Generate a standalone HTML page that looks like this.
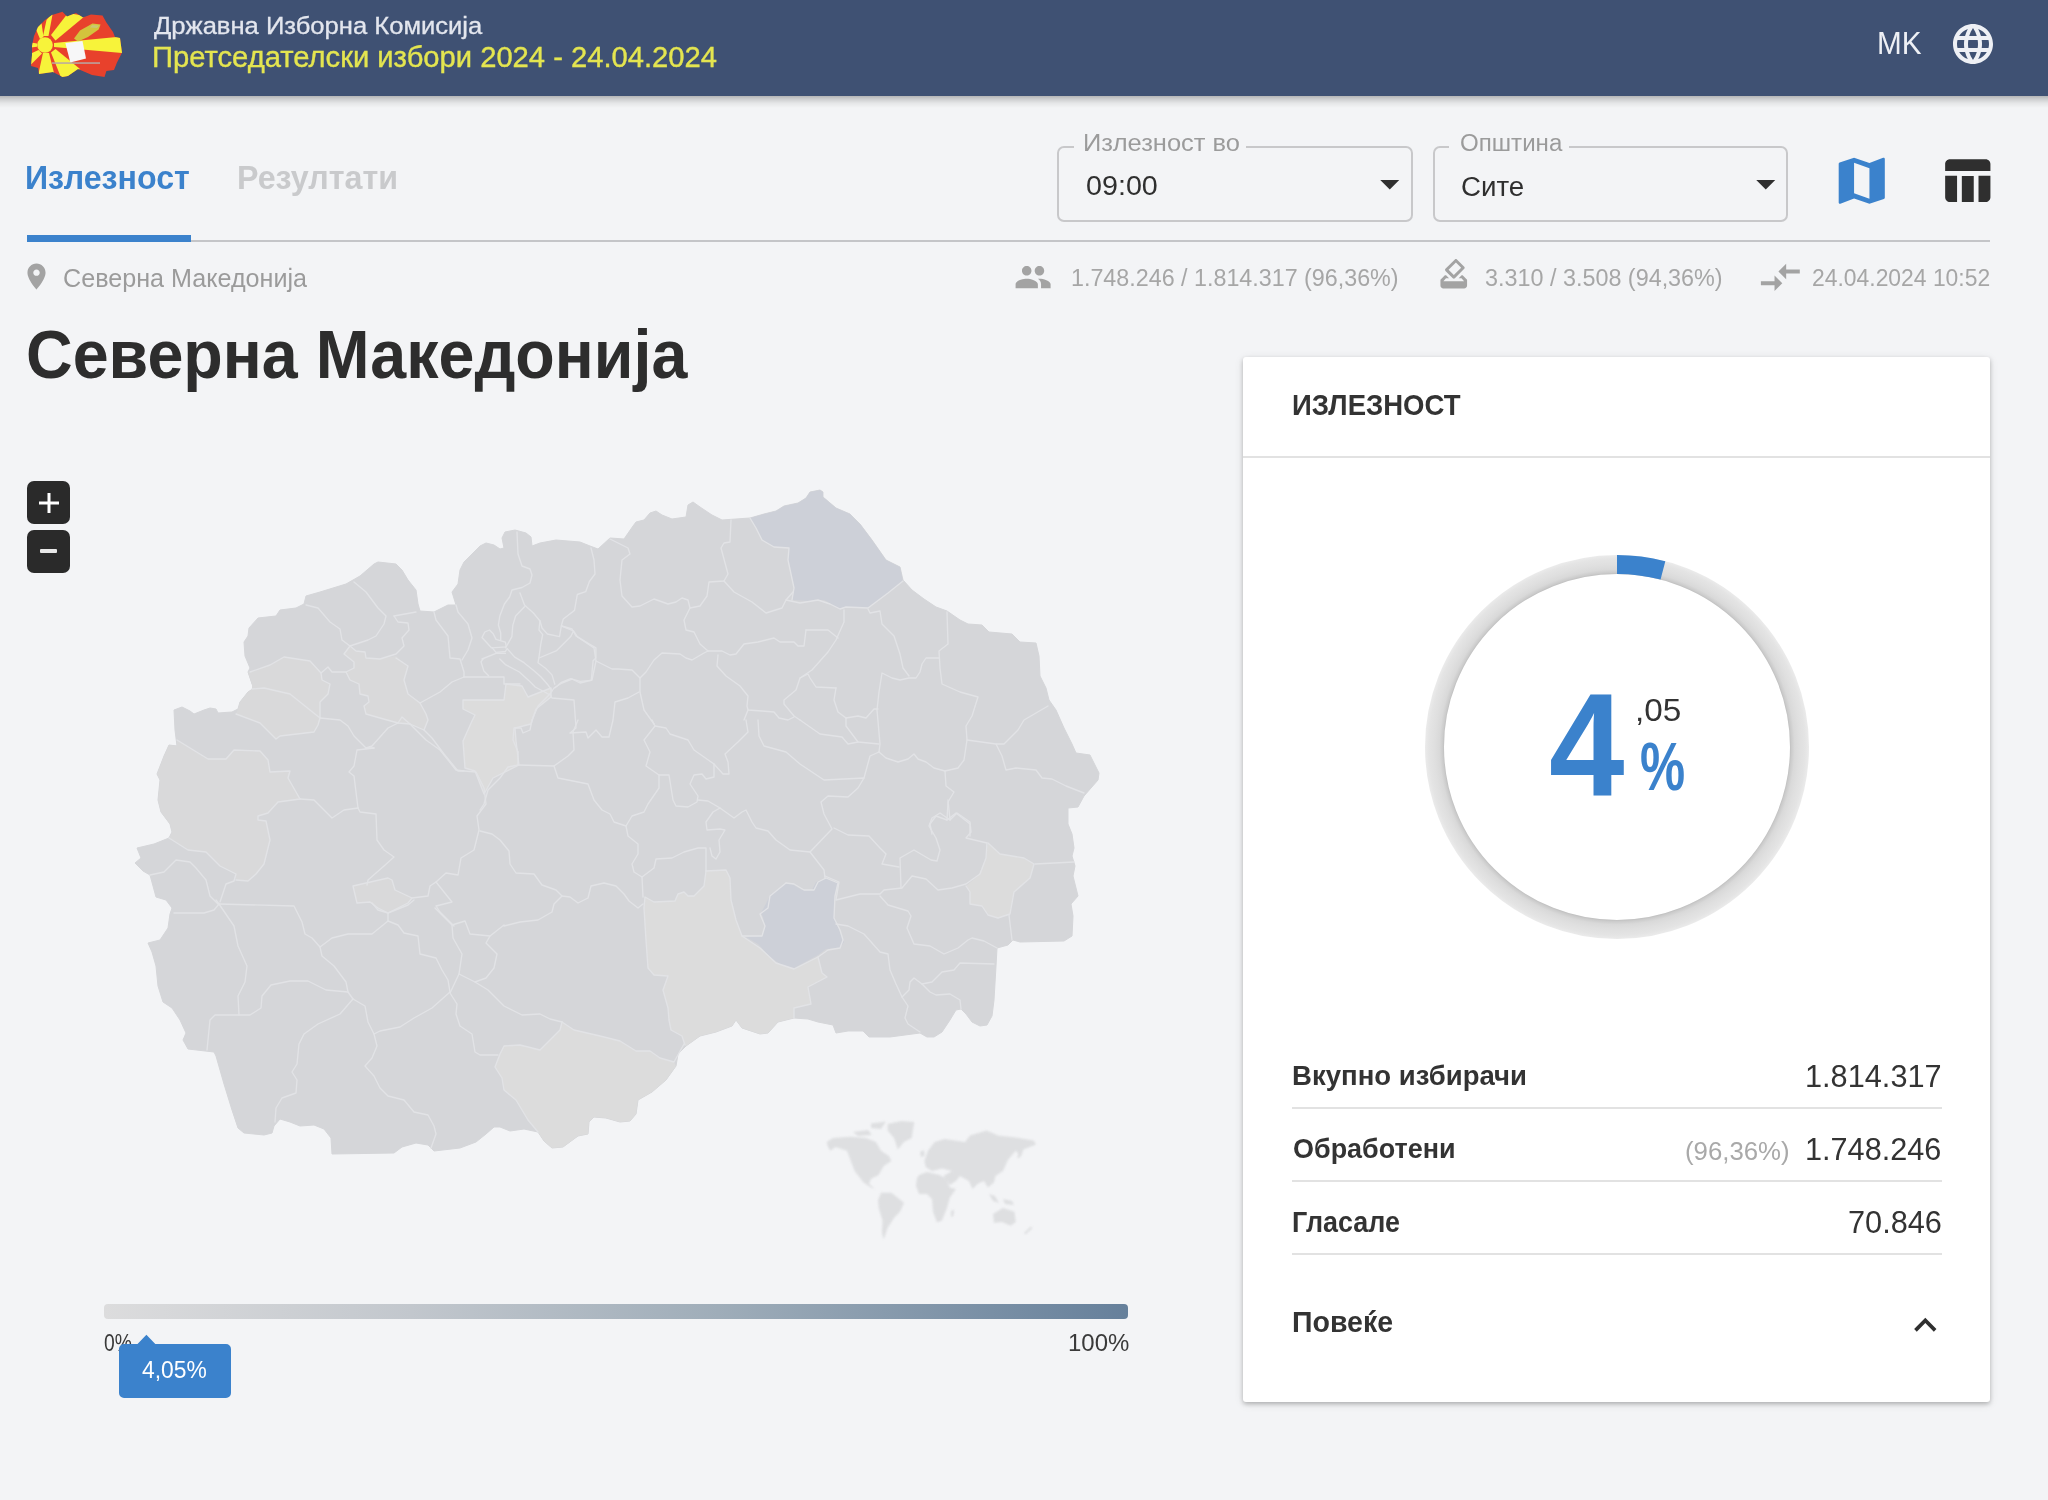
<!DOCTYPE html>
<html lang="mk"><head><meta charset="utf-8"><title>Државна Изборна Комисија – Излезност</title>
<style>
html,body{margin:0;padding:0}
body{width:2048px;height:1500px;position:relative;overflow:hidden;background:#f3f4f6;font-family:"Liberation Sans",sans-serif}
.t{position:absolute;white-space:nowrap;line-height:1;transform-origin:0 0;display:block}
.abs{position:absolute}
header{position:absolute;left:0;top:0;width:2048px;height:96px;background:#3f5173}
.hsh{position:absolute;left:0;top:96px;width:2048px;height:12px;background:linear-gradient(180deg,rgba(0,0,0,.26) 0,rgba(0,0,0,.16) 25%,rgba(0,0,0,.06) 60%,rgba(0,0,0,0) 100%)}
.sel{position:absolute;top:146px;height:75.500px;border:2px solid #c8c8ca;border-radius:7px;box-sizing:border-box}
.lblbg{position:absolute;top:144px;height:6px;background:#f3f4f6}
.zb{position:absolute;left:27px;width:43px;height:43px;border-radius:7px;background:#2a2a2a}
.card{position:absolute;left:1243px;top:357px;width:747px;height:1045px;background:#fff;border-radius:3px;box-shadow:0 2px 4px rgba(0,0,0,.22),0 2px 10px rgba(0,0,0,.10)}
.hr{position:absolute;height:2px;background:#e2e2e2}
svg{position:absolute;overflow:visible}
</style></head>
<body>
<header>
<svg style="left:0;top:0" width="140" height="96" viewBox="0 0 140 96">
<defs><clipPath id="lg"><path d="M32 46L34 36 38 27 45 20 52 15 62.500 11.700 67 16.600 76 13 83 17.600 91 14.600 102.500 15.600 106.400 22.500 113 32 115 37 120 38 122 52.700 117 62.500 114 70 106.400 71 104.500 77 92 75 78 69 68 76 62.500 77 53 72 39 74 38 68 31 66 32 55z"/></clipPath></defs>
<g clip-path="url(#lg)">
<rect x="28" y="8" width="98" height="72" fill="#e8412c"/>
<g fill="#f7f33a">
<polygon points="51,35 68,13 85,16 55.500,40.500"/>
<polygon points="43,36 46.500,20 53,12 48.500,36"/>
<polygon points="40,39 35,27 41.500,23 43.500,37"/>
<polygon points="37,43.500 28,42 28,48 37,46.800"/>
<polygon points="38.500,50 28,55 28,67.500 42,53.500"/>
<polygon points="43,53 37.500,78 54.500,75 49,53"/>
<polygon points="51,52.500 62,80 80,69 55.500,49"/>
<polygon points="54,43 126,36.200 126,53.300 54,47"/>
<circle cx="45" cy="45" r="7.800"/>
</g>
</g>
<polygon points="74,38.500 80,30.500 92.500,23.400 100.600,24.400 98.600,29.500 88,37 78,41.500" fill="#d3c43c"/>
<polygon points="92,25 99,25.500 97,28 90,27.500" fill="#c9c872"/>
<polygon points="65.400,43 82.500,41 86,58.500 70.300,62.500" fill="#f7f7f8"/>
<rect x="52" y="62.300" width="48" height="1.500" fill="#b9a9a4"/>
</svg>
<span class="t" id="h1" style="left:154.0px;top:13.8px;font-size:24.3px;font-weight:400;color:#e3e6ee;transform:scaleX(1.0525);-webkit-text-stroke:0.30px #e3e6ee">Државна Изборна Комисија</span>
<span class="t" id="h2" style="left:151.7px;top:43.0px;font-size:28.6px;font-weight:400;color:#e4e550;transform:scaleX(1.0201);-webkit-text-stroke:0.35px #e4e550">Претседателски избори 2024 - 24.04.2024</span>
<span class="t" id="mk" style="left:1876.6px;top:28.4px;font-size:31.0px;font-weight:400;color:#eef0f5;transform:scaleX(0.9584)">MK</span>
<svg style="left:1948.5px;top:20.0px" width="48.0" height="48.0" viewBox="0 0 24 24"><path fill="#eef0f5" d="M11.99 2C6.47 2 2 6.48 2 12s4.47 10 9.99 10C17.52 22 22 17.52 22 12S17.52 2 11.99 2zm6.93 6h-2.95c-.32-1.25-.78-2.45-1.38-3.56 1.84.63 3.37 1.91 4.33 3.56zM12 4.04c.83 1.2 1.48 2.53 1.91 3.96h-3.82c.43-1.43 1.08-2.76 1.91-3.96zM4.26 14C4.1 13.36 4 12.69 4 12s.1-1.36.26-2h3.38c-.08.66-.14 1.32-.14 2 0 .68.06 1.34.14 2H4.26zm.82 2h2.95c.32 1.25.78 2.45 1.38 3.56-1.84-.63-3.37-1.9-4.33-3.56zm2.95-8H5.08c.96-1.66 2.49-2.93 4.33-3.56C8.81 5.55 8.35 6.75 8.03 8zM12 19.96c-.83-1.2-1.48-2.53-1.91-3.96h3.82c-.43 1.43-1.08 2.76-1.91 3.96zM14.34 14H9.66c-.09-.66-.16-1.32-.16-2 0-.68.07-1.35.16-2h4.68c.09.65.16 1.32.16 2 0 .68-.07 1.34-.16 2zm.25 5.56c.6-1.11 1.06-2.31 1.38-3.56h2.95c-.96 1.65-2.49 2.93-4.33 3.56zM16.36 14c.08-.66.14-1.32.14-2 0-.68-.06-1.34-.14-2h3.38c.16.64.26 1.31.26 2s-.1 1.36-.26 2h-3.38z"/></svg>
</header>
<div class="hsh"></div>

<nav>
<span class="t" id="tab1" style="left:25.4px;top:161.5px;font-size:32.7px;font-weight:700;color:#3b82cc;transform:scaleX(0.9838)">Излезност</span>
<span class="t" id="tab2" style="left:237.3px;top:161.5px;font-size:32.7px;font-weight:700;color:#c9cacc;transform:scaleX(0.9858)">Резултати</span>
<div class="abs" style="left:27px;top:240px;width:1963px;height:2px;background:#c4c5c8"></div>
<div class="abs" style="left:27px;top:235px;width:164px;height:7px;background:#3b82cc"></div>
</nav>

<section>
<div class="sel" style="left:1057px;width:355.500px"></div>
<div class="lblbg" style="left:1073.5px;width:172px"></div>
<span class="t" id="sl1" style="left:1083.2px;top:131.8px;font-size:23.3px;font-weight:400;color:#9b9b9b;transform:scaleX(1.0937)">Излезност во</span>
<span class="t" id="sv1" style="left:1085.6px;top:172.0px;font-size:28.0px;font-weight:400;color:#2f2f2f;transform:scaleX(1.0247)">09:00</span>
<svg style="left:1380px;top:179.5px" width="19.500" height="9.500" viewBox="0 0 18 9"><path d="M0 0h18L9 9z" fill="#2f2f2f"/></svg>
<div class="sel" style="left:1432.500px;width:355.500px"></div>
<div class="lblbg" style="left:1449.3px;width:120px"></div>
<span class="t" id="sl2" style="left:1459.6px;top:131.8px;font-size:23.3px;font-weight:400;color:#9b9b9b;transform:scaleX(1.0342)">Општина</span>
<span class="t" id="sv2" style="left:1461.2px;top:171.7px;font-size:28.4px;font-weight:400;color:#2f2f2f;transform:scaleX(0.9756)">Сите</span>
<svg style="left:1755.5px;top:179.5px" width="19.500" height="9.500" viewBox="0 0 18 9"><path d="M0 0h18L9 9z" fill="#2f2f2f"/></svg>
<svg style="left:1830.5px;top:150.0px" width="61.5" height="61.5" viewBox="0 0 24 24"><path fill="#3b82cc" d="M20.5 3l-.16.03L15 5.1 9 3 3.36 4.9c-.21.07-.36.25-.36.48V20.5c0 .28.22.5.5.5l.16-.03L9 18.9l6 2.1 5.64-1.9c.21-.07.36-.25.36-.48V3.5c0-.28-.22-.5-.5-.5zM15 19l-6-2.11V5l6 2.11V19z"/></svg>
<svg style="left:1938.3px;top:152.3px" width="57.2" height="57.2" viewBox="0 0 24 24"><path fill="#2f2f2f" d="M10 10.02h5V21h-5zM17 21h3c1.1 0 2-.9 2-2v-9h-5v11zm3-18H5c-1.1 0-2 .9-2 2v3h19V5c0-1.1-.9-2-2-2zM3 19c0 1.1.9 2 2 2h3V10H3v9z"/></svg>
</section>

<section>
<svg style="left:20.9px;top:261.2px" width="31.0" height="31.0" viewBox="0 0 24 24"><path fill="#a3a3a3" d="M12 2C8.13 2 5 5.13 5 9c0 5.25 7 13 7 13s7-7.75 7-13c0-3.870-3.130-7-7-7zm0 9.5c-1.380 0-2.5-1.120-2.5-2.5s1.120-2.5 2.500-2.500 2.500 1.120 2.500 2.500-1.120 2.500-2.500 2.500z"/></svg>
<span class="t" id="loc" style="left:63.0px;top:264.7px;font-size:26.2px;font-weight:400;color:#9b9b9b;transform:scaleX(0.9599)">Северна Македонија</span>
<svg style="left:1014.3px;top:258.0px" width="38.2" height="38.2" viewBox="0 0 24 24"><path fill="#a3a3a3" d="M16 11c1.660 0 2.990-1.340 2.990-3S17.660 5 16 5c-1.660 0-3 1.340-3 3s1.340 3 3 3zm-8 0c1.660 0 2.990-1.340 2.990-3S9.660 5 8 5C6.340 5 5 6.340 5 8s1.340 3 3 3zm0 2c-2.330 0-7 1.170-7 3.500V19h14v-2.500c0-2.330-4.670-3.500-7-3.500zm8 0c-.290 0-.620.020-.970.050 1.160.840 1.970 1.970 1.970 3.450V19h6v-2.500c0-2.330-4.670-3.500-7-3.500z"/></svg>
<span class="t" id="i1" style="left:1070.6px;top:265.9px;font-size:24.6px;font-weight:400;color:#a6a6a6;transform:scaleX(0.9469)">1.748.246 / 1.814.317 (96,36%)</span>
<svg style="left:1435.6px;top:256.0px" width="35.5" height="35.5" viewBox="0 0 24 24"><path fill="#a3a3a3" d="M18 13h-.68l-2 2h1.910L19 17H5l1.780-2h2.050l-2-2H6l-3 3v4c0 1.100.890 2 1.990 2H19c1.100 0 2-.890 2-2v-4l-3-3zm-1-5.050l-4.950 4.950-3.540-3.540 4.950-4.950L17 7.950zm-4.240-5.660L6.390 8.660c-.390.390-.390 1.020 0 1.410l4.950 4.950c.390.390 1.020.390 1.410 0l6.360-6.360c.390-.390.390-1.020 0-1.410L14.160 2.300c-.380-.400-1.010-.400-1.400-.010z"/></svg>
<span class="t" id="i2" style="left:1485.4px;top:265.9px;font-size:24.6px;font-weight:400;color:#a6a6a6;transform:scaleX(0.9498)">3.310 / 3.508 (94,36%)</span>
<svg style="left:1757.0px;top:254.3px" width="46.7" height="46.7" viewBox="0 0 24 24"><path fill="#a3a3a3" d="M9.010 14H2v2h7.010v3L13 15l-3.990-4v3zm5.980-1v-3H22V8h-7.010V5L11 9l3.990 4z"/></svg>
<span class="t" id="i3" style="left:1811.8px;top:265.9px;font-size:24.6px;font-weight:400;color:#a6a6a6;transform:scaleX(0.9305)">24.04.2024 10:52</span>
</section>

<main>
<h1 style="margin:0"><span class="t" id="title" style="left:25.5px;top:321.0px;font-size:68.6px;font-weight:700;color:#2d2d2d;transform:scaleX(0.9415)">Северна Македонија</span></h1>
<div class="zb" style="top:481px"><svg style="left:11.5px;top:11.5px" width="20" height="20" viewBox="0 0 20 20"><path d="M8.500 0h3v8.500H20v3h-8.500V20h-3v-8.500H0v-3h8.500z" fill="#fff"/></svg></div>
<div class="zb" style="top:529.5px"><svg style="left:13px;top:19.500px" width="17" height="4" viewBox="0 0 17 4"><rect width="17" height="4" rx="1" fill="#e8e8e8"/></svg></div>
<svg style="left:0;top:0" width="2048" height="1500" viewBox="0 0 2048 1500"><defs><clipPath id="mk"><polygon points="252,684 248,672 250,668 245,656 244,642 248,636 249,628 258,618 276,616 280,610 296,608 304,604 306,596 320,592 346,584 360,576 374,564 378,562 396,564 402,570 408,580 416,590 418,604 420,611 434,612 448,605 456,605 452,592 458,584 460,570 464,562 470,556 480,546 486,543 494,545 500,549 504,548 502,538 505,532 515,530 526,533 531,537 532,546 540,543 556,540 580,542 590,546 598,549 610,538 624,539 633,526 636,522 644,520 650,513 656,511 662,515 672,519 686,517 688,505 693,502 700,507 712,515 722,520 750,518 764,514 768,513 776,511 784,506 798,503 806,498 810,492 820,490 823,492 823,497 836,508 850,514 860,524 872,540 886,560 900,567 903,580 912,590 924,599 936,607 947,611 960,620 968,624 982,625 989,632 1012,634 1020,642 1036,643 1039,656 1040,676 1046,688 1049,700 1056,710 1064,728 1072,744 1076,753 1090,755 1099,773 1098,780 1084,796 1078,807 1068,808 1068,824 1072,834 1074,848 1072,856 1075,866 1073,876 1076,888 1078,896 1071,904 1073,916 1072,936 1064,941 1020,942 1013,940 1008,945 997,948 996,966 994,1000 992,1016 987,1025 980,1026 972,1022 966,1014 961,1009 956,1010 950,1020 942,1032 934,1037 927,1037 920,1033 890,1037 869,1037 863,1031 848,1031 836,1033 833,1025 818,1022 808,1019 794,1018 778,1022 768,1033 760,1034 748,1030 742,1028 736,1020 732,1026 716,1032 700,1036 686,1046 678,1054 676,1066 666,1080 652,1092 638,1100 636,1114 630,1121 620,1122 606,1118 594,1117 589,1122 588,1134 578,1136 563,1147 552,1148 544,1141 538,1132 524,1129 510,1131 500,1127 494,1127 486,1134 476,1142 460,1148 434,1151 428,1145 416,1143 402,1147 394,1153 332,1154 331,1138 324,1129 314,1125 300,1126 290,1122 280,1119 274,1126 272,1133 264,1135 244,1133 238,1128 232,1110 224,1084 216,1056 214,1052 188,1049 183,1040 186,1033 180,1020 172,1008 163,1002 158,986 156,966 152,952 148,943 160,940 168,928 170,914 172,908 166,900 156,897 150,875 143,871 135,863 141,858 137,848 154,844 169,838 172,832 170,824 161,812 158,800 160,780 157,774 164,756 169,745 177,746 175,730 174,710 182,707 190,711 194,714 204,710 210,708 216,709 218,713 232,712 238,709 240,702 248,692 254,688"/></clipPath></defs><polygon points="252,684 248,672 250,668 245,656 244,642 248,636 249,628 258,618 276,616 280,610 296,608 304,604 306,596 320,592 346,584 360,576 374,564 378,562 396,564 402,570 408,580 416,590 418,604 420,611 434,612 448,605 456,605 452,592 458,584 460,570 464,562 470,556 480,546 486,543 494,545 500,549 504,548 502,538 505,532 515,530 526,533 531,537 532,546 540,543 556,540 580,542 590,546 598,549 610,538 624,539 633,526 636,522 644,520 650,513 656,511 662,515 672,519 686,517 688,505 693,502 700,507 712,515 722,520 750,518 764,514 768,513 776,511 784,506 798,503 806,498 810,492 820,490 823,492 823,497 836,508 850,514 860,524 872,540 886,560 900,567 903,580 912,590 924,599 936,607 947,611 960,620 968,624 982,625 989,632 1012,634 1020,642 1036,643 1039,656 1040,676 1046,688 1049,700 1056,710 1064,728 1072,744 1076,753 1090,755 1099,773 1098,780 1084,796 1078,807 1068,808 1068,824 1072,834 1074,848 1072,856 1075,866 1073,876 1076,888 1078,896 1071,904 1073,916 1072,936 1064,941 1020,942 1013,940 1008,945 997,948 996,966 994,1000 992,1016 987,1025 980,1026 972,1022 966,1014 961,1009 956,1010 950,1020 942,1032 934,1037 927,1037 920,1033 890,1037 869,1037 863,1031 848,1031 836,1033 833,1025 818,1022 808,1019 794,1018 778,1022 768,1033 760,1034 748,1030 742,1028 736,1020 732,1026 716,1032 700,1036 686,1046 678,1054 676,1066 666,1080 652,1092 638,1100 636,1114 630,1121 620,1122 606,1118 594,1117 589,1122 588,1134 578,1136 563,1147 552,1148 544,1141 538,1132 524,1129 510,1131 500,1127 494,1127 486,1134 476,1142 460,1148 434,1151 428,1145 416,1143 402,1147 394,1153 332,1154 331,1138 324,1129 314,1125 300,1126 290,1122 280,1119 274,1126 272,1133 264,1135 244,1133 238,1128 232,1110 224,1084 216,1056 214,1052 188,1049 183,1040 186,1033 180,1020 172,1008 163,1002 158,986 156,966 152,952 148,943 160,940 168,928 170,914 172,908 166,900 156,897 150,875 143,871 135,863 141,858 137,848 154,844 169,838 172,832 170,824 161,812 158,800 160,780 157,774 164,756 169,745 177,746 175,730 174,710 182,707 190,711 194,714 204,710 210,708 216,709 218,713 232,712 238,709 240,702 248,692 254,688" fill="#d5d6d9" stroke="#d5d6d9" stroke-width="1" stroke-linejoin="round"/><g clip-path="url(#mk)"><polygon points="706,871 726,870 730,878 731,900 736,920 742,936 760,948 776,963 794,969 818,957 822,973 827,977 808,987 811,1004 794,1008 794,1018 778,1022 768,1033 760,1034 748,1030 742,1028 736,1020 732,1026 716,1032 700,1036 686,1046 684,1044 682,1036 671,1030 669,1020 668,1008 663,990 668,976 654,975 648,968 646,940 644,908 645,897 654,902 675,901 678,894 684,892 688,896 694,896 704,886" fill="#dcdcdc" /><polygon points="562,1022 574,1030 600,1036 620,1041 636,1051 650,1051 660,1058 674,1062 676,1066 666,1080 652,1092 638,1100 636,1114 630,1121 620,1122 606,1118 594,1117 589,1122 588,1134 578,1136 563,1147 552,1148 544,1141 538,1132 528,1120 516,1100 504,1090 502,1078 495,1067 500,1054 504,1046 520,1045 540,1050 552,1038 560,1030" fill="#dcdcdc" /><polygon points="988,843 1000,854 1024,858 1034,864 1030,878 1014,892 1010,914 998,918 988,915 982,906 970,904 970,892 966,886 978,876 986,858" fill="#dcdcdc" /><polygon points="463,700 504,700 506,684 522,686 528,697 551,688 551,697 536,709 531,724 515,728 516,741 519,765 493,778 484,794 475,771 465,768 463,741 472,721 475,715 463,709" fill="#dcdcdc" /><polygon points="177,740 208,759 226,759 234,750 260,751 268,760 270,772 290,771 288,778 300,799 278,802 268,813 258,816 258,820 266,821 270,840 264,864 256,874 248,881 236,880 236,874 220,866 206,852 188,850 169,838 172,832 170,824 161,812 158,800 160,780 157,774 164,756 169,745 177,746" fill="#d9d9da" /><polygon points="250,672 270,665 284,657 310,661 321,673 322,680 330,684 328,694 320,702 320,718 290,694 264,688 252,689 252,684 248,672" fill="#d9d9da" /><polygon points="252,689 264,688 290,694 320,718 318,725 314,732 280,736 276,739 260,723 236,714 238,709 240,702 248,692 254,688" fill="#d9d9da" /><polygon points="350,646 356,651 365,652 366,658 380,659 396,656 408,666 404,680 408,694 420,703 426,714 428,720 424,730 410,724 398,723 380,718 366,714 364,706 369,702 368,696 360,694 359,684 350,680 346,672 354,668 354,662 344,654" fill="#d9d9da" /><polygon points="353,886 388,878 392,880 395,890 412,898 408,903 388,913 378,908 370,902 357,903" fill="#d9d9da" /><polygon points="750,518 764,514 768,513 776,511 784,506 798,503 806,498 810,492 820,490 823,492 823,497 836,508 850,514 860,524 872,540 886,560 900,567 903,581 888,593 868,608 846,607 840,609 824,600 812,601 792,600 794,588 788,560 789,548 774,547 762,540 756,528" fill="#cdd0d8" /><polygon points="761,913 771,894 787,883 790,883 802,890 812,890 816,882 826,878 838,883 835,896 834,916 840,932 844,942 840,948 826,949 818,955 794,968 780,964 770,957 758,944 746,937 762,936 765,926 763,917" fill="#cdd0d8" /><g fill="none" stroke="#e2e3e6" stroke-width="1.35" stroke-linejoin="round" stroke-linecap="round"><polyline points="518,752 518,765 508,767 500,778 488,790 484,804 480,810"/><polyline points="518,765 554,766 568,756 574,750 573,732 578,720"/><polyline points="554,766 558,778 588,784 594,800 602,810 610,814 614,822 626,826 632,816 644,812 648,804 659,788 659,775 646,766 650,752 644,740 655,726 652,720"/><polyline points="655,726 666,728 670,734 688,740 694,750 714,764 723,774 729,774 728,762 725,754 738,742 748,732 746,720"/><polyline points="659,775 669,775 673,800 676,806 688,807 697,802 698,796 690,784 694,775 702,774 706,779 714,777 714,764"/><polyline points="698,800 708,801 720,808 734,818 742,812 746,810 752,822 756,828 768,831 776,840 790,850 810,852 832,829 824,814 821,802 828,796 848,797 858,788 864,778 824,780 800,764 786,752 764,746 759,736 758,720"/><polyline points="810,852 824,870 825,878"/><polyline points="626,826 628,836 638,844 638,854 632,864 634,872 642,877 654,868 656,859 672,858 684,852 698,848 706,848 706,871"/><polyline points="710,848 712,856 716,859 720,852 719,840 725,830 720,829 707,830 706,822 713,812 720,808"/><polyline points="642,877 643,897"/><polyline points="480,831 492,834 500,840 509,851 510,864 516,873 534,874 542,885 556,890 562,896 570,897 578,903 588,898 591,886 604,883 616,886 624,894 629,901 638,908 643,904"/><polyline points="562,896 554,904 552,912 538,920 520,922 504,926"/><polyline points="706,871 726,870 730,878 731,900 736,920 742,936 760,948 776,963 794,969 818,957 822,973 827,977 808,987 811,1004 794,1008 794,1018"/><polyline points="706,871 704,886 694,896 688,896 684,892 678,894 675,901 654,902 645,897 644,908 646,940 648,968 654,975 668,976 663,990 668,1008 669,1020 671,1030 682,1036 685,1045"/><polyline points="786,883 794,884 804,890 814,890 818,882 826,878 838,883 835,896 834,918 840,930 843,940 840,948 828,950 818,957"/><polyline points="742,936 762,936 765,926 760,914 768,908 770,896 786,883"/><polyline points="354,582 366,592 378,608 386,616 384,624 376,636 368,640 350,646 344,654 354,662 354,668 346,672 332,672 328,667 321,673 310,661 284,657 270,665 250,672"/><polyline points="306,605 318,608 330,622 340,629 342,640 350,646"/><polyline points="394,616 416,612"/><polyline points="394,616 398,622 408,623 409,630 402,638 404,646 396,654 380,659 366,658 365,652 356,651 350,646"/><polyline points="434,612 436,620 448,636 450,658 460,659 464,672 464,677"/><polyline points="456,605 458,612 468,624 472,638 468,650 462,660"/><polyline points="464,677 504,677 504,684 520,684"/><polyline points="464,677 452,682 440,692 420,703 408,694 404,680 408,666 396,658"/><polyline points="321,673 322,680 330,684 328,694 320,702 320,718 290,694 264,688 252,689"/><polyline points="346,672 350,680 359,684 360,694 368,696 369,702 364,706 366,714 380,718 398,723 410,724"/><polyline points="420,703 426,714 428,720 424,730 410,724 402,717 398,723"/><polyline points="320,718 318,725 314,732 280,736 276,739 260,723 236,714"/><polyline points="320,718 340,720 348,726 354,736 366,748 372,746 388,728 398,723"/><polyline points="410,724 426,740 440,750 456,770 464,771"/><polyline points="463,700 504,700 506,684 522,686 528,697 551,688 551,697 536,709 531,724 515,728 516,741 519,765 493,778 484,794 475,771 465,768 463,741 472,721 475,715 463,709 463,700"/><polyline points="610,539 628,548 630,554 622,560 620,580 622,596 632,607 640,606 654,599 668,604 676,602 682,598 688,600 690,608 684,620 686,630 694,632 700,644 708,651"/><polyline points="690,608 700,606 707,596 709,582 724,581 728,574 721,548 724,543 730,542 731,520"/><polyline points="724,581 734,592 752,602 766,613 782,608 786,600 793,592"/><polyline points="750,518 756,528 762,540 774,547 789,548 788,560 794,588 792,600"/><polyline points="786,600 800,603 818,600 830,604 840,609 846,607 868,608 888,593 903,581"/><polyline points="844,610 844,622 836,640 828,652 812,670 800,678 796,690 784,700 784,704 794,716 800,720"/><polyline points="806,630 828,630 838,638"/><polyline points="806,630 804,646 798,646 794,642 780,642 774,638 758,642 744,644 736,654 730,655 722,651 708,651"/><polyline points="708,651 704,653 692,660 686,658 680,654 662,653 654,660 646,672 640,678 640,692 644,710 654,724"/><polyline points="718,655 717,666 726,676 740,686 748,696 747,706 748,710 762,711 774,712 779,718 788,720 794,717"/><polyline points="748,710 744,720"/><polyline points="640,678 632,670 618,669 612,669 596,661 594,648 576,636 572,629 562,626"/><polyline points="596,661 592,680 580,683 572,679 562,683 554,688 550,694"/><polyline points="550,694 552,698 574,700 576,728 570,733 586,732 588,738 596,730 602,737 609,737 613,720 615,702 628,698 639,692"/><polyline points="550,694 538,706 532,720 530,730 523,733 521,728 514,728 513,740 518,752"/><polyline points="868,609 870,613 880,611 882,624 894,636 900,654 903,668 909,676"/><polyline points="947,612 948,644 939,651 940,668 942,684 960,692 978,697 972,716 966,726 967,740 964,760 958,768 945,771"/><polyline points="939,658 926,658 922,664 920,672 916,678 909,678 900,680 892,678 882,673 879,692 877,710 880,744 879,752"/><polyline points="879,752 886,758 898,762 908,759 914,754 918,759 926,762 934,768 945,771"/><polyline points="967,740 996,744 1004,744 1018,730 1024,720 1048,706"/><polyline points="996,744 1002,756 1006,770 1016,768 1036,770 1042,778 1052,779 1066,786 1084,793"/><polyline points="945,771 946,786 954,792 948,802 947,820 936,816 930,824 932,834"/><polyline points="947,820 956,813 970,824 970,836"/><polyline points="879,752 870,756 864,778"/><polyline points="846,718 858,716 866,718 874,709 878,709"/><polyline points="846,718 846,726 858,742 879,744"/><polyline points="858,742 848,744 842,737 820,734 800,720"/><polyline points="836,688 834,700 838,712 846,718"/><polyline points="836,688 816,687 810,678 808,674 800,678"/><polyline points="834,828 848,835 869,836 880,848 886,854 882,864 899,867"/><polyline points="825,876 839,882 836,900 860,894 880,894 884,890 902,888 912,876 926,879 938,890 952,888 966,884 980,874 986,858 987,843 966,838 971,832 970,822 957,813 950,820 948,800"/><polyline points="950,820 940,813 932,818 929,826 936,838 940,850 937,861 931,860 914,850 900,858 901,888"/><polyline points="988,843 1000,854 1024,858 1034,864 1030,878 1014,892 1010,914 998,918 988,915 982,906 970,904 970,892 966,886"/><polyline points="1035,864 1074,862"/><polyline points="1009,915 1012,940"/><polyline points="880,896 888,905 908,911 911,916 907,928 914,944 930,946 944,954 958,948 968,940 972,938 984,941 997,948"/><polyline points="836,924 848,926 864,934 880,952 888,954 890,970 896,984 902,997 908,1006 905,1018 908,1024 920,1032"/><polyline points="902,997 909,990 910,982 914,978 922,984 930,992 936,995 950,994 960,1000 961,1009"/><polyline points="922,984 932,982 942,972 954,970 960,963 994,964"/><polyline points="435,908 452,925 465,921 470,934 490,936 504,925"/><polyline points="452,925 453,938 462,954 459,974 475,982 486,978 494,968 497,954 486,943 490,936"/><polyline points="459,974 450,993 457,1004 456,1014 460,1026 472,1034 475,1052 480,1055 498,1055"/><polyline points="475,982 488,990 504,1006 522,1015 540,1014 550,1019 562,1022"/><polyline points="562,1022 574,1030 600,1036 620,1041 636,1051 650,1051 660,1058 674,1062 684,1044"/><polyline points="538,1132 528,1120 516,1100 504,1090 502,1078 495,1067 500,1054 504,1046 520,1045 540,1050 552,1038 560,1030 562,1022"/><polyline points="174,913 204,913 214,910 219,904 216,900"/><polyline points="219,904 294,906 302,922 305,934 312,938 320,947 322,956 334,966 346,982 348,992 353,999"/><polyline points="219,904 234,926 238,946 247,966 245,982 238,996 239,1015"/><polyline points="207,1050 210,1020 215,1015 250,1015 261,1008 262,996 271,985 290,981 308,981 326,990 348,992"/><polyline points="353,999 340,1014 318,1024 304,1034 299,1044 297,1064 292,1072 297,1080 296,1093 282,1098 276,1108 275,1122"/><polyline points="353,999 365,1006 368,1022 374,1034 377,1046 372,1058 365,1066 374,1076 380,1088 388,1096 404,1100 414,1112 428,1115 434,1126 436,1134 431,1148"/><polyline points="374,1034 380,1031 400,1027 414,1018 432,1008 450,992"/><polyline points="320,947 332,938 348,934 372,934 388,921 388,913 378,910 372,903"/><polyline points="388,921 398,925 404,933 418,936 420,954 436,958 442,970 448,980 450,992"/><polyline points="388,913 408,905 414,900"/><polyline points="177,740 208,759 226,759 234,750 260,751 268,760 270,772 290,771 288,778 300,799"/><polyline points="300,799 278,802 268,813 258,816 258,820 266,821 270,840 264,864 256,874 248,881 236,880"/><polyline points="169,838 188,850 206,852 220,866 236,874 234,881 226,884 220,902"/><polyline points="150,875 164,872 176,860 190,862 196,868 206,880 210,896 218,904"/><polyline points="300,799 314,800 332,818 344,810 358,808"/><polyline points="358,808 354,776 349,772 354,766 357,750 374,748"/><polyline points="358,808 360,812 376,814 377,840 384,850 394,857 384,866 368,880 367,885"/><polyline points="353,886 388,878 392,880 395,890 412,898 408,903 388,913 378,908 370,902 357,903 353,886"/><polyline points="412,898 428,896 430,886 436,882 452,902 436,906 440,912 454,926"/><polyline points="436,882 446,873 458,875 461,858 474,850 479,830 477,816 486,804 484,788 476,772 464,771 458,771 444,754 432,738 424,730"/><polyline points="374,748 366,748"/><polyline points="517,532 518,554 520,560 522,566 530,569 532,575 530,583 522,587.5 512,590 509.6,597 504.4,604 499.8,616 498.4,625 500.7,633 500.7,640"/><polyline points="520,593 524.5,605 533.4,613 540,621 542,628 547.4,634 559.5,636.6 561.4,625.4 563.3,619 574.5,610.4 577.3,594.5 585.7,591.7 589.4,581.5 595,574 594,560 591,548"/><polyline points="524.5,606.7 515.6,616 512.8,625.4 511.9,636.6 507.2,645 505.4,647.8"/><polyline points="482,637.5 484.8,632 489.5,630 493.2,633.8 496,639.4 505.4,642.2 506.3,646.8 491.4,647.8 482,637.5"/><polyline points="492.3,647.8 496,652.4 505.4,651.5 507.2,648.7"/><polyline points="482,659 496,653.4 505.4,653.4"/><polyline points="507.2,648.7 514.7,657.1 524,662.7 533.4,670.2 540.8,676.7 547.4,684.2 552,690.7"/><polyline points="499.8,659 505.4,664.6 519.4,672 528.7,680.4 535.2,687 549.2,694.5"/><polyline points="483,659 481,661.8 483.9,671.1 488.6,675.8"/><polyline points="539.9,620.7 539,630 542.7,634.7 540.8,644 539,657.1 538,662.7 545.5,668.3 552,674.9 554.8,684.2"/><polyline points="539,658 556.7,650.6 563.3,644 570.7,636.6 573.5,631 562.3,626.3"/><polyline points="573.5,631 577.3,636.6 589.4,644 595.9,647.8 595.9,658 593.1,660.8 591.3,680.4 580,681.4 570.7,678.6 561.4,682.3 554.8,687.9"/></g></g><g fill="#dcdddf" style="filter:blur(0.8px)" opacity="0.9">
<polygon points="826.7,1141.9 833,1138 850.8,1136.8 866,1138 876,1141.9 881,1150.8 888.9,1155.9 891.4,1160.9 883.8,1166 878.7,1174.9 871,1178.7 869,1183.8 874.9,1188.9 871,1187.6 863.5,1182.5 854.6,1171 850.8,1160.9 847,1150.8 835.5,1147 830.5,1150.8 827.9,1147"/>
<polygon points="887.6,1124 901.6,1121 914.3,1122 911.7,1138 904,1141.9 897.8,1149.5 894,1138 887.6,1130.5"/>
<polygon points="871,1123.5 886,1121.6 881,1129 871,1128"/>
<polygon points="853,1132 868,1130 872,1135 858,1136"/>
<polygon points="881,1192.7 891.4,1192.7 904,1202.8 900,1211.7 894,1218 887.6,1228 883.8,1239.6 881.9,1233 882.5,1220.6 878.7,1208 878,1200"/>
<polygon points="924.4,1160.9 928,1150.8 934.6,1141.9 944.7,1139 965,1141.9 970,1135.5 986.6,1130.5 998,1135.5 1015.8,1137.5 1033.6,1140.6 1036,1144.4 1023.4,1149.5 1020.9,1157 1015.8,1150.8 1008,1159.7 1003,1171 995.5,1176 994,1182.5 987.9,1187.600 984,1181 977.7,1183.8 972.6,1188.9 968.8,1181 960,1176 956,1181 949.8,1185 943.4,1176 952,1171 942,1168.5 932,1171 925.7,1167"/>
<polygon points="919,1174.9 927,1172 939.6,1174.9 946,1178.7 949.8,1187.6 956,1188.9 949.8,1197.7 947,1208 942,1220.6 937,1222.5 933,1211.7 932,1199 927,1194 919,1194 916,1186 916.8,1178.7"/>
<polygon points="993,1214 1003,1208 1014.5,1211.7 1015.8,1221.9 1010.7,1225.7 1001.8,1221.9 994,1223"/>
<polygon points="989,1194 995,1196 999,1203 993,1201"/>
<polygon points="1003,1199 1012,1201 1014,1205 1005,1204"/>
<polygon points="1024,1233 1031,1226.5 1032.500,1228 1025.5,1234.5"/>
<polygon points="1017,1157 1020,1152 1021.500,1153 1019,1158.500"/>
<polygon points="951,1211 954,1209.500 953.500,1216 951,1217"/>
<polygon points="920,1152 924,1150 924.500,1156 921,1157"/>
</g></svg>
<div class="abs" style="left:104px;top:1304px;width:1024px;height:14.5px;border-radius:4px;background:linear-gradient(90deg,#dcdcdd 0%,#c2c7cd 30%,#9fadb9 60%,#66809b 100%)"></div>
<span class="t" id="l0" style="left:104.2px;top:1331.4px;font-size:23.9px;font-weight:400;color:#3a3a3a;transform:scaleX(0.8074)">0%</span>
<span class="t" id="l100" style="left:1067.8px;top:1331.4px;font-size:23.9px;font-weight:400;color:#3a3a3a;transform:scaleX(1.0025)">100%</span>
<svg style="left:119px;top:1334px" width="112" height="64" viewBox="0 0 112 64"><path d="M5 10h13.500L27.400 0.700 36.300 10H107a5 5 0 0 1 5 5v44a5 5 0 0 1-5 5H5a5 5 0 0 1-5-5V15a5 5 0 0 1 5-5z" fill="#3b82cc"/></svg>
<span class="t" id="tip" style="left:141.8px;top:1358.2px;font-size:24.0px;font-weight:400;color:#ffffff;transform:scaleX(0.9526)">4,05%</span>
</main>

<aside class="card"></aside>
<div>
<span class="t" id="ct" style="left:1292.0px;top:391.3px;font-size:28.7px;font-weight:700;color:#333333;transform:scaleX(0.9593)">ИЗЛЕЗНОСТ</span>
<div class="hr" style="left:1243px;top:456px;width:747px"></div>
<svg style="left:1424px;top:554px" width="386" height="386" viewBox="-193 -193 386 386">
<defs><radialGradient id="rg" cx="0" cy="0" r="192" gradientUnits="userSpaceOnUse">
<stop offset="0.899" stop-color="#bdbdbd"/><stop offset="0.908" stop-color="#cbcbcb"/><stop offset="0.925" stop-color="#d9d9d9"/><stop offset="0.95" stop-color="#dfdfdf"/><stop offset="0.98" stop-color="#e4e4e4"/><stop offset="1" stop-color="#ebebeb"/></radialGradient></defs>
<circle r="182.5" fill="none" stroke="url(#rg)" stroke-width="19"/>
<path d="M0 -192A192 192 0 0 1 48.330 -185.820L43.550 -167.430A173 173 0 0 0 0 -173z" fill="#3b82cc"/>
</svg>
<span class="t" id="big4" style="left:1548.6px;top:671.6px;font-size:147.4px;font-weight:700;color:#3b82cc;transform:scaleX(0.9212)">4</span>
<span class="t" id="dec" style="left:1635.3px;top:694.6px;font-size:31.7px;font-weight:400;color:#333333;transform:scaleX(1.0519)">,05</span>
<span class="t" id="pct" style="left:1640.2px;top:732.7px;font-size:68.9px;font-weight:700;color:#3b82cc;transform:scaleX(0.7364)">%</span>
<span class="t" id="r1l" style="left:1291.9px;top:1061.3px;font-size:28.4px;font-weight:700;color:#333333;transform:scaleX(0.9702)">Вкупно избирачи</span><span class="t" id="r1v" style="left:1805.2px;top:1060.8px;font-size:31.9px;font-weight:400;color:#333333;transform:scaleX(0.9629)">1.814.317</span>
<div class="hr" style="left:1292px;top:1107px;width:650px"></div>
<span class="t" id="r2l" style="left:1292.5px;top:1134.4px;font-size:28.4px;font-weight:700;color:#333333;transform:scaleX(0.9497)">Обработени</span><span class="t" id="r2p" style="left:1684.6px;top:1139.2px;font-size:25.1px;font-weight:400;color:#a9a9a9;transform:scaleX(1.0274)">(96,36%)</span><span class="t" id="r2v" style="left:1805.2px;top:1134.0px;font-size:31.9px;font-weight:400;color:#333333;transform:scaleX(0.9607)">1.748.246</span>
<div class="hr" style="left:1292px;top:1180.3px;width:650px"></div>
<span class="t" id="r3l" style="left:1291.9px;top:1207.5px;font-size:28.6px;font-weight:700;color:#333333;transform:scaleX(0.9407)">Гласале</span><span class="t" id="r3v" style="left:1847.5px;top:1207.2px;font-size:31.9px;font-weight:400;color:#333333;transform:scaleX(0.9631)">70.846</span>
<div class="hr" style="left:1292px;top:1253.3px;width:650px"></div>
<span class="t" id="more" style="left:1291.8px;top:1307.7px;font-size:28.9px;font-weight:700;color:#333333;transform:scaleX(0.9872)">Повеќе</span>
<svg style="left:1902.5px;top:1302.9px" width="44.6" height="44.6" viewBox="0 0 24 24"><path fill="#2f2f2f" d="M12 8l-6 6 1.410 1.410L12 10.830l4.590 4.580L18 14z"/></svg>
</div>
</body></html>
